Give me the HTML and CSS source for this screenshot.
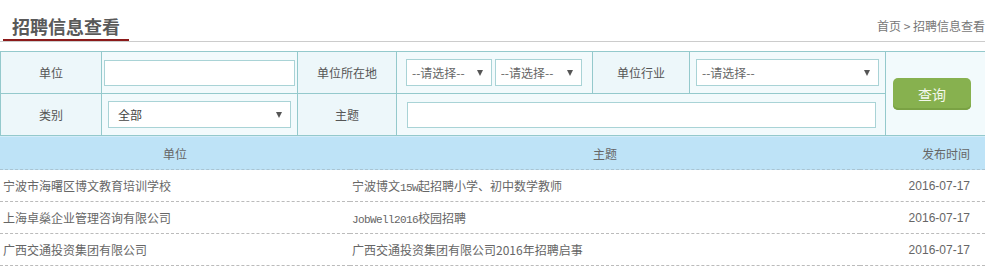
FILE: index.html
```html
<!DOCTYPE html>
<html lang="zh-CN">
<head>
    <meta charset="UTF-8">
    <title>招聘信息查看</title>
    <link rel="stylesheet" href="styles.css">
</head>
<body>
    <div class="head">
        <h2 class="title">招聘信息查看</h2>
        <div class="crumb">首页 &gt; 招聘信息查看</div>
    </div>

    <table class="search">
        <colgroup>
            <col class="c-lab"><col class="c-field"><col class="c-lab2"><col class="c-field">
            <col class="c-lab3"><col class="c-field"><col class="c-btn">
        </colgroup>
        <tr>
            <th>单位</th>
            <td class="pad-unit"><input class="txt unit" type="text"></td>
            <th>单位所在地</th>
            <td class="pad-area">
                <span class="sel w-prov"><select><option>--请选择--</option></select></span>
                <span class="sel w-city"><select><option>--请选择--</option></select></span>
            </td>
            <th>单位行业</th>
            <td class="pad-ind"><span class="sel w-ind"><select><option>--请选择--</option></select></span></td>
            <td class="btn-cell" rowspan="2"><button class="btn">查询</button></td>
        </tr>
        <tr>
            <th>类别</th>
            <td class="pad-ind"><span class="sel w-ind"><select class="dark"><option>全部</option></select></span></td>
            <th>主题</th>
            <td class="pad-topic" colspan="3"><input class="txt topic" type="text"></td>
        </tr>
    </table>

    <table class="list">
        <colgroup><col class="l-unit"><col class="l-topic"><col class="l-date"></colgroup>
        <thead>
            <tr><th>单位</th><th>主题</th><th class="date">发布时间</th></tr>
        </thead>
        <tbody>
            <tr>
                <td>宁波市海曙区博文教育培训学校</td>
                <td>宁波博文<span class="mono">15W</span>起招聘小学、初中数学教师</td>
                <td class="date">2016-07-17</td>
            </tr>
            <tr>
                <td>上海卓燊企业管理咨询有限公司</td>
                <td><span class="mono">JobWell2016</span>校园招聘</td>
                <td class="date">2016-07-17</td>
            </tr>
            <tr>
                <td>广西交通投资集团有限公司</td>
                <td>广西交通投资集团有限公司2016年招聘启事</td>
                <td class="date">2016-07-17</td>
            </tr>
        </tbody>
    </table>
</body>
</html>
```

FILE: styles.css
```css
body {
    margin: 0;
    font-family: "Noto Sans CJK SC", "Liberation Sans", sans-serif;
    font-size: 12px;
    color: #666;
    background: #fff;
}

/* page heading */
.head {
    display: flex;
    justify-content: space-between;
    border-bottom: 1px solid #ccc;
}
.title {
    margin: 0 0 0 3px;
    padding: 13px 9px 0;
    font-size: 18px;
    line-height: 26px;
    font-weight: bold;
    color: #595959;
    border-bottom: 2px solid #8b1a1a;
}
.crumb {
    padding-top: 13px;
    line-height: 26px;
    color: #777;
    white-space: nowrap;
}

/* search form */
.search {
    margin-top: 9px;
    width: 985px;
    border-collapse: collapse;
    table-layout: fixed;
}
.c-lab { width: 101px; }
.c-field { width: 196px; }
.c-lab2 { width: 99px; }
.c-lab3 { width: 97px; }
.c-btn { width: 100px; }
.search th,
.search td {
    border: 1px solid #94c9cc;
    height: 41px;
    padding: 0;
    background: #f2fafc;
}
.search th {
    font-weight: normal;
    color: #555;
    background: #edf7fa;
}
.pad-unit { padding-left: 2px !important; }
.pad-area { padding-left: 9px !important; }
.pad-ind { padding-left: 6px !important; }
.pad-topic { padding-left: 10px !important; }

.txt {
    box-sizing: border-box;
    height: 26px;
    border: 1px solid #a9d3d6;
    background: #fff;
    display: block;
}
.unit { width: 191px; }
.topic { width: 469px; }

.sel {
    position: relative;
    display: inline-block;
    vertical-align: middle;
}
.sel select {
    box-sizing: border-box;
    width: 100%;
    height: 27px;
    appearance: none;
    -webkit-appearance: none;
    border: 1px solid #a9d3d6;
    border-radius: 0;
    background: #fff;
    padding: 0 18px 0 5px;
    font-family: inherit;
    font-size: 12px;
    color: #666;
}
.sel select.dark {
    padding-left: 9px;
    color: #444;
}
.sel::after {
    content: '';
    position: absolute;
    right: 9px;
    top: 11px;
    border-left: 3px solid transparent;
    border-right: 3px solid transparent;
    border-top: 6px solid #555;
    pointer-events: none;
}
.w-prov { width: 86px; }
.w-city { width: 87px; }
.w-ind { width: 183px; }

.btn-cell {
    padding-left: 7px !important;
}
.btn {
    width: 78px;
    height: 32px;
    border: 0;
    border-radius: 5px;
    background: #87b14f;
    box-shadow: inset 0 -2px 0 #7aa244;
    color: #f4f8ee;
    font-family: inherit;
    font-size: 14px;
}

/* result list */
.list {
    width: 985px;
    border-collapse: collapse;
    table-layout: fixed;
}
.l-unit { width: 350px; }
.l-topic { width: 510px; }
.list th {
    height: 32px;
    padding: 0;
    font-weight: normal;
    color: #666;
    background: #bee3f7;
    border-top: 1px solid #d3ecf9;
    border-bottom: 1px dashed #aac4d2;
}
.list td {
    height: 31px;
    padding: 0 0 0 3px;
    border-bottom: 1px dashed #bbb;
    white-space: nowrap;
}
.list td + td {
    padding-left: 2px;
}
.list .date {
    text-align: right;
    padding-right: 15px;
    font-family: "Liberation Sans", sans-serif;
}
.list th.date {
    font-family: "Noto Sans CJK SC", sans-serif;
}
.mono {
    font-family: "Liberation Mono", monospace;
    font-size: 11px;
    letter-spacing: -0.6px;
}
```
